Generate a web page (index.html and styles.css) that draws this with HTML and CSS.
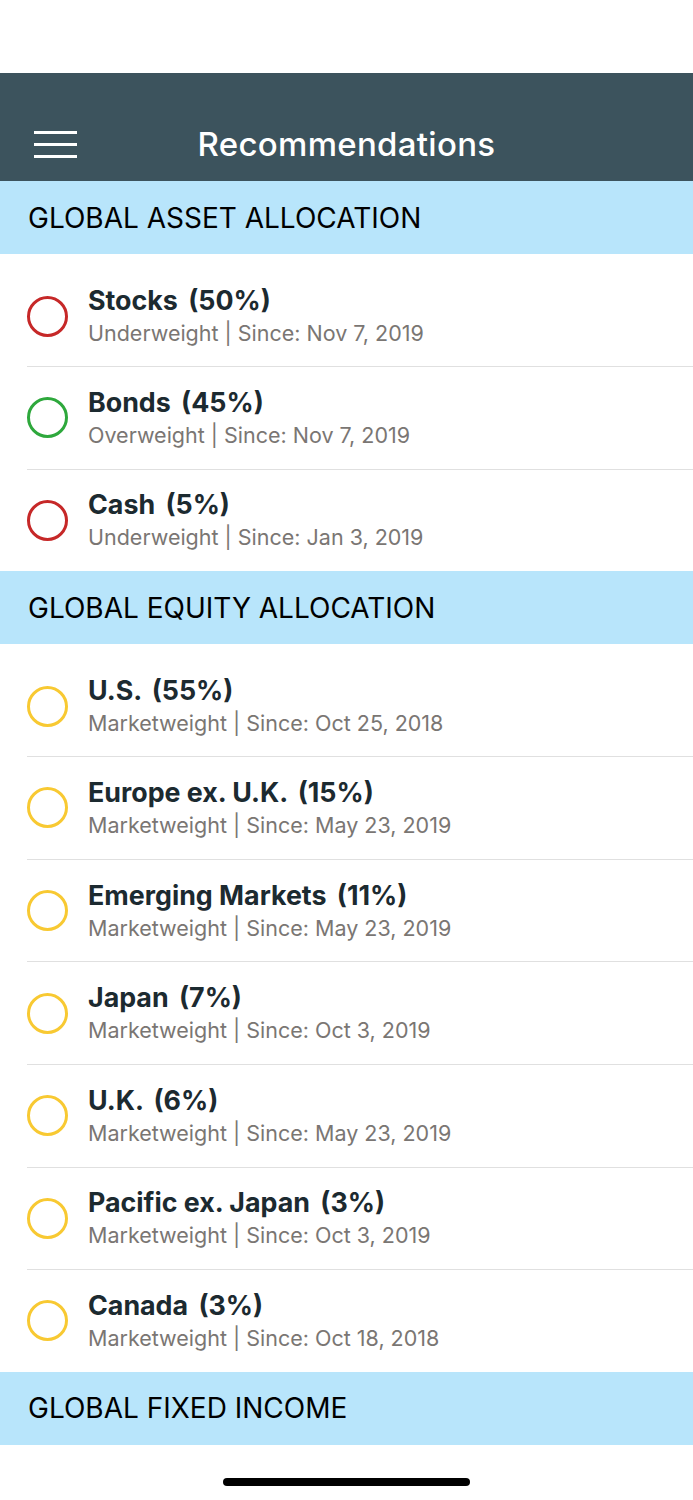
FILE: index.html
```html
<!DOCTYPE html>
<html lang="en">

<head>
    <meta charset="UTF-8">
    <meta name="viewport" content="width=device-width, initial-scale=1.0">
    <title>Recommendations</title>
    <link rel="stylesheet" href="styles.css">
</head>

<body>
    <div id="statusBar"></div>

    <nav>
        <button id="menuButton" aria-label="Menu">
            <span></span>
            <span></span>
            <span></span>
        </button>
        <h1>Recommendations</h1>
    </nav>

    <div id="content">

        <!-- Asset allocation -->
        <div class="sectionHeader">GLOBAL ASSET ALLOCATION</div>
        <ul class="list">
            <li class="item">
                <span class="dot red"></span>
                <div class="text">
                    <div class="title">Stocks <span class="pct">(50%)</span></div>
                    <div class="sub">Underweight | Since: Nov 7, 2019</div>
                </div>
            </li>
            <li class="item">
                <span class="dot green"></span>
                <div class="text">
                    <div class="title">Bonds <span class="pct">(45%)</span></div>
                    <div class="sub">Overweight | Since: Nov 7, 2019</div>
                </div>
            </li>
            <li class="item">
                <span class="dot red"></span>
                <div class="text">
                    <div class="title">Cash <span class="pct">(5%)</span></div>
                    <div class="sub">Underweight | Since: Jan 3, 2019</div>
                </div>
            </li>
        </ul>

        <!-- Equity allocation -->
        <div class="sectionHeader">GLOBAL EQUITY ALLOCATION</div>
        <ul class="list">
            <li class="item">
                <span class="dot yellow"></span>
                <div class="text">
                    <div class="title">U.S. <span class="pct">(55%)</span></div>
                    <div class="sub">Marketweight | Since: Oct 25, 2018</div>
                </div>
            </li>
            <li class="item">
                <span class="dot yellow"></span>
                <div class="text">
                    <div class="title">Europe ex. U.K. <span class="pct">(15%)</span></div>
                    <div class="sub">Marketweight | Since: May 23, 2019</div>
                </div>
            </li>
            <li class="item">
                <span class="dot yellow"></span>
                <div class="text">
                    <div class="title">Emerging Markets <span class="pct">(11%)</span></div>
                    <div class="sub">Marketweight | Since: May 23, 2019</div>
                </div>
            </li>
            <li class="item">
                <span class="dot yellow"></span>
                <div class="text">
                    <div class="title">Japan <span class="pct">(7%)</span></div>
                    <div class="sub">Marketweight | Since: Oct 3, 2019</div>
                </div>
            </li>
            <li class="item">
                <span class="dot yellow"></span>
                <div class="text">
                    <div class="title">U.K. <span class="pct">(6%)</span></div>
                    <div class="sub">Marketweight | Since: May 23, 2019</div>
                </div>
            </li>
            <li class="item">
                <span class="dot yellow"></span>
                <div class="text">
                    <div class="title">Pacific ex. Japan <span class="pct">(3%)</span></div>
                    <div class="sub">Marketweight | Since: Oct 3, 2019</div>
                </div>
            </li>
            <li class="item">
                <span class="dot yellow"></span>
                <div class="text">
                    <div class="title">Canada <span class="pct">(3%)</span></div>
                    <div class="sub">Marketweight | Since: Oct 18, 2018</div>
                </div>
            </li>
        </ul>

        <!-- Fixed income -->
        <div class="sectionHeader">GLOBAL FIXED INCOME</div>
    </div>

    <div id="homeIndicator"></div>
</body>

</html>
```

FILE: styles.css
```css
body {
    margin: 0;
    background-color: white;
    font-family: "Inter", "Roboto", sans-serif;
    overflow: hidden;
}

#statusBar {
    height: 73px;
}

nav {
    height: 108px;
    background-color: #3c535d;
    display: flex;
    align-items: center;
    padding-top: 34px;
    box-sizing: border-box;
}

#menuButton {
    background-color: transparent;
    border: none;
    padding: 0;
    margin-left: 34px;
    width: 43px;
    height: 27px;
    display: flex;
    flex-direction: column;
    justify-content: space-between;
}

#menuButton span {
    display: block;
    height: 3px;
    width: 100%;
    background-color: white;
}

nav h1 {
    flex: 1;
    margin: 0;
    padding-right: 77px;
    text-align: center;
    color: white;
    font-size: 33px;
    font-weight: 500;
    letter-spacing: 0.3px;
}

.sectionHeader {
    height: 73px;
    background-color: #b8e5fb;
    display: flex;
    align-items: center;
    padding-left: 28px;
    font-size: 28px;
    color: black;
}

.list {
    list-style: none;
    margin: 0;
    padding: 0;
}

.item {
    display: flex;
    align-items: center;
    margin-left: 27px;
    height: 102.6px;
    box-sizing: border-box;
}

.item + .item {
    border-top: 1px solid #e0e0e0;
}

.item:first-child {
    height: 112px;
    padding-top: 12px;
}

.dot {
    width: 41px;
    height: 41px;
    border-radius: 50%;
    border: 3px solid;
    box-sizing: border-box;
    flex-shrink: 0;
}

.red {
    border-color: #c62828;
}

.green {
    border-color: #2ea83c;
}

.yellow {
    border-color: #f8c932;
}

.text {
    margin-left: 20px;
}

.title {
    font-size: 26.8px;
    font-weight: 700;
    color: #1c2a30;
    line-height: 32px;
}

.pct {
    margin-left: 4px;
}

.sub {
    font-size: 21.5px;
    color: #7a7673;
    line-height: 30px;
    margin-top: 2px;
}

#homeIndicator {
    position: fixed;
    bottom: 14px;
    left: 223px;
    width: 247px;
    height: 8px;
    border-radius: 4px;
    background-color: black;
}
```
